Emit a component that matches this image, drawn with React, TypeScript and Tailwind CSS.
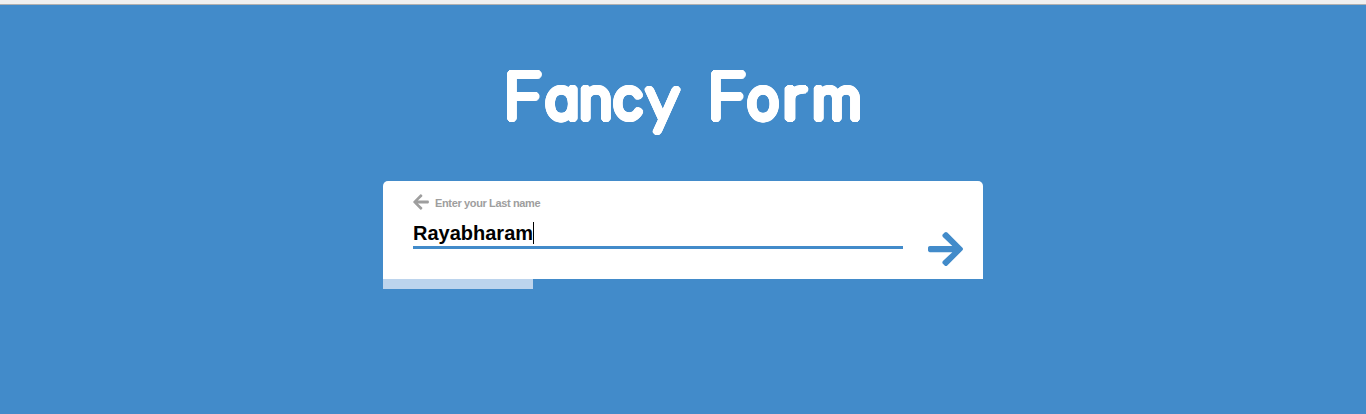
import { FaArrowLeft, FaArrowRight } from 'react-icons/fa';

const glyph =
  "inline-block whitespace-pre text-left";

function Title() {
  return (
    <h1
      aria-label="Fancy Form"
      className="flex h-[90px] items-baseline pl-[503px] font-['Inter',sans-serif] text-[57px] leading-[90px] font-extralight text-white [font-feature-settings:'cv11'] [text-shadow:3px_0_#fff,-3px_0_#fff,0_3px_#fff,0_-3px_#fff,2.1px_2.1px_#fff,-2.1px_2.1px_#fff,2.1px_-2.1px_#fff,-2.1px_-2.1px_#fff,2.8px_1.1px_#fff,-2.8px_1.1px_#fff,2.8px_-1.1px_#fff,-2.8px_-1.1px_#fff,1.1px_2.8px_#fff,-1.1px_2.8px_#fff,1.1px_-2.8px_#fff,-1.1px_-2.8px_#fff]"
    >
      <span className={`${glyph} w-[42px] origin-left scale-x-110 text-[63px]`}>F</span>
      <span className={`${glyph} w-[34px] font-light`}>a</span>
      <span className={`${glyph} w-[34px] font-light`}>n</span>
      <span className={`${glyph} w-[33px] origin-left scale-x-95 font-light`}>c</span>
      <span className={`${glyph} w-[35px] translate-y-0.5 font-['Lato'] text-[66px] font-light`}>y</span>
      <span className={`${glyph} w-[26px]`}> </span>
      <span className={`${glyph} w-[40px] origin-left scale-x-110 text-[63px]`}>F</span>
      <span className={`${glyph} w-[35px] origin-left scale-x-95 font-light`}>o</span>
      <span className={`${glyph} w-[30px] origin-left scale-x-125`}>r</span>
      <span className={`${glyph} w-[54px] font-light`}>m</span>
    </h1>
  );
}

export default function App() {
  return (
    <div className="flex h-[414px] w-full flex-col overflow-hidden bg-[#428bca] font-['Liberation_Sans',Arial,sans-serif]">
      <div className="h-[5px] shrink-0 border-b border-[#b0b0b0] bg-[#f0f0f0]" />
      <div className="mt-11">
        <Title />
      </div>
      <main className="mx-auto mt-[42px] w-[600px]">
        <div className="flex h-[98px] rounded-t-[5px] bg-white pr-5 pl-[30px]">
          <div className="w-[490px] pt-3">
            <div className="flex h-[19px] items-center gap-[6px] text-[11px] font-bold tracking-[-0.36px] text-[#9e9e9e]">
              <FaArrowLeft className="mb-px h-[18px] w-4" />
              <span className="pt-px">Enter your Last name</span>
            </div>
            <div className="mt-[9px] flex h-[28px] border-b-3 border-[#428bca] text-xl leading-[24px] font-bold text-black">
              <span>Rayabharam</span>
              <span className="mt-px h-[22px] w-px bg-black" />
            </div>
          </div>
          <button className="mt-12 ml-auto h-10 text-[#428bca]" aria-label="Next">
            <FaArrowRight className="h-10 w-[35px]" />
          </button>
        </div>
        <div className="h-[10px] w-[150px] bg-[#bcd4ed]" />
      </main>
    </div>
  );
}
